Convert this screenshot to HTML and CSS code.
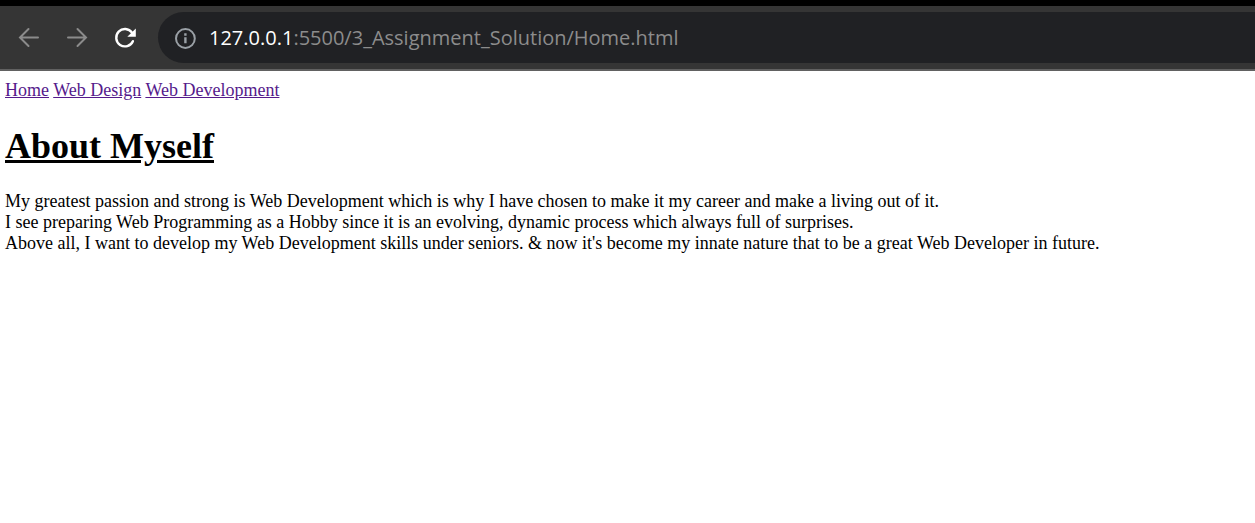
FILE: index.html
```html
<!DOCTYPE html>
<html lang="en">
<head>
<meta charset="utf-8">
<meta name="viewport" content="width=device-width, initial-scale=1">
<title>Home</title>
<link rel="stylesheet" href="styles.css">
</head>
<body>
<header class="toolbar">
  <div class="nav-buttons">
    <button class="nav-button" type="button" aria-label="Back">
      <svg class="icon" viewBox="0 0 24 24" aria-hidden="true"><path d="M21 11.500H3.500M11.500 3 3 11.500l8.500 8.500"/></svg>
    </button>
    <button class="nav-button" type="button" aria-label="Forward">
      <svg class="icon" viewBox="0 0 24 24" aria-hidden="true"><path d="M3 11.500h17.500M12.500 3l8.500 8.500-8.500 8.500"/></svg>
    </button>
    <button class="nav-button nav-button-active" type="button" aria-label="Reload">
      <svg class="icon" viewBox="0 0 24 24" aria-hidden="true"><path class="reload-arc" d="M19 6.600A8.700 8.700 0 1 0 19.900 15.200"/><path class="reload-head" d="M22.800 2.500v8.200h-8.500z"/></svg>
    </button>
  </div>
  <div class="address-bar">
    <button class="site-info" type="button" aria-label="View site information">
      <svg class="icon" viewBox="0 0 24 24" aria-hidden="true"><circle cx="12.400" cy="12.500" r="9.400"/><path class="info-mark" d="M12.400 11.300v6M12.400 7.300v2.400"/></svg>
    </button>
    <div class="address" role="textbox" aria-label="Address" contenteditable="true" spellcheck="false"><span class="host">127.0.0.1</span>:5500/3_Assignment_Solution/Home.html</div>
  </div>
</header>
<main class="page">
  <nav>
    <a class="link" href="#home">Home</a>
    <a class="link" href="#design">Web Design</a>
    <a class="link" href="#development">Web Development</a>
  </nav>
  <h1 class="title">About Myself</h1>
  <p class="text">My greatest passion and strong is Web Development which is why I have chosen to make it my career and make a living out of it.<br>
  I see preparing Web Programming as a Hobby since it is an evolving, dynamic process which always full of surprises.<br>
  Above all, I want to develop my Web Development skills under seniors. &amp; now it's become my innate nature that to be a great Web Developer in future.</p>
</main>
</body>
</html>
```
FILE: styles.css
```css
* {
  box-sizing: border-box;
}

body {
  margin: 0;
  background: #fff;
  color: #000;
  font: 18px/21px "Liberation Serif", "Times New Roman", serif;
}

.toolbar {
  display: flex;
  align-items: center;
  gap: 21px;
  padding: 6px 0 6px 17px;
  border-top: 6px solid #000;
  border-bottom: 2px solid #616161;
  background: #353535;
}

.nav-buttons {
  display: flex;
  gap: 24px;
}

.nav-button,
.site-info {
  display: flex;
  padding: 0;
  border: 0;
  background: none;
  color: #8b8b8b;
}

.nav-button-active {
  color: #fff;
}

.icon {
  width: 24px;
  height: 24px;
  fill: none;
  stroke: currentColor;
  stroke-width: 2;
  stroke-linecap: round;
}

.reload-arc {
  stroke-width: 2.4;
}

.reload-head {
  fill: currentColor;
  stroke: none;
}

.info-mark {
  stroke-width: 2.4;
  stroke-linecap: butt;
}

.address-bar {
  display: flex;
  flex: 1;
  align-items: center;
  gap: 12px;
  min-width: 0;
  height: 51px;
  padding-left: 15px;
  border-radius: 26px 0 0 26px;
  background: #202124;
}

.site-info {
  color: #9aa0a6;
}

.address {
  flex: 1;
  overflow: hidden;
  color: #8c8c8c;
  font: 20px/28px "Open Sans", "Noto Sans", sans-serif;
  white-space: nowrap;
}

.host {
  color: #fff;
}

.page {
  padding: 9px 5px;
}

.link {
  color: #551a8b;
}

.title {
  margin: 24px 0;
  font-size: 36px;
  line-height: 42px;
  text-decoration: underline;
}

.text {
  margin: 0;
}
```
